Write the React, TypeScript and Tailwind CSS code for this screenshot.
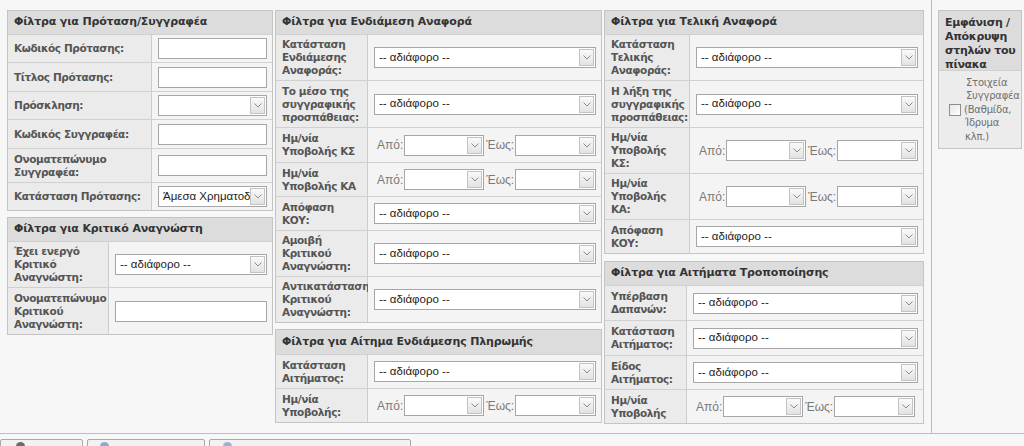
import React from "react";

const VF = { fontFamily: '"DejaVu Sans", Verdana, sans-serif' };
const AF = { fontFamily: '"Liberation Sans", Arial, sans-serif' };

function Arrow() {
  return (
    <div className="ml-auto mr-[1px] flex h-[17px] w-[15px] shrink-0 items-center justify-center border border-[#c3c3c3] bg-gradient-to-b from-[#fafafa] to-[#e2e2e2]">
      <svg width="8" height="5" viewBox="0 0 8 5">
        <path d="M0.5 0.5 L4 4 L7.5 0.5" fill="none" stroke="#8c8c8c" strokeWidth="1" />
      </svg>
    </div>
  );
}

function Select({ text = "", className = "w-full" }: { text?: string; className?: string }) {
  return (
    <div className={`flex h-[21px] shrink-0 items-center overflow-hidden border border-[#a6a6a6] bg-white ${className}`}>
      <span className="min-w-0 flex-1 overflow-hidden whitespace-nowrap pl-[4px] text-[11.5px] text-[#222]" style={AF}>
        {text}
      </span>
      <Arrow />
    </div>
  );
}

function Input() {
  return <input readOnly className="h-[21px] w-full border border-[#a6a6a6] bg-white outline-none" />;
}

function DateRange() {
  return (
    <div className="flex items-center pl-[3px] text-[12px] text-[#7a7a7a]" style={AF}>
      <span className="pr-[1px]">Από:</span>
      <Select className="w-[80px]" />
      <span className="pl-[2px] pr-[1px]">Έως:</span>
      <Select className="w-[81px]" />
    </div>
  );
}

function Row({ label, lw, h, children }: { label: string[]; lw: string; h: string; children: React.ReactNode }) {
  return (
    <div className={`flex border-t border-[#d0d0d0] ${h}`}>
      <div
        className={`flex shrink-0 items-center border-r border-[#cdcdcd] bg-[#ebebeb] pl-[6px] pr-[1px] text-[10.5px] font-bold leading-[13px] tracking-[-0.4px] text-[#555] ${lw}`}
        style={VF}
      >
        <div className="whitespace-nowrap">
          {label.map((l, i) => (
            <div key={i}>{l}</div>
          ))}
        </div>
      </div>
      <div className="flex min-w-0 flex-1 items-center bg-[#f4f4f4] pl-[6px] pr-[5px]">{children}</div>
    </div>
  );
}

function Panel({ title, children, hh = "h-[23px]" }: { title: string; children: React.ReactNode; hh?: string }) {
  return (
    <div className="border border-[#c4c4c4] bg-[#f4f4f4]">
      <div
        className={`flex items-center whitespace-nowrap bg-[#dcdcdc] px-[6px] text-[11px] font-bold tracking-[-0.15px] text-[#333] ${hh}`}
        style={VF}
      >
        {title}
      </div>
      {children}
    </div>
  );
}

const ANY = "-- αδιάφορο --";

export default function App() {
  return (
    <div className="h-[446px] w-[1024px] overflow-hidden bg-[#f7f7f7]" style={VF}>
      <div className="flex h-[434px] border-b border-[#bdbdbd]">
        <div className="flex w-[932px] shrink-0 gap-[2px] border-r border-[#bdbdbd] pl-[7px] pt-[10px]">
          {/* column 1 */}
          <div className="flex w-[266px] shrink-0 flex-col gap-[6px]">
            <Panel title="Φίλτρα για Πρόταση/Συγγραφέα">
              <Row label={["Κωδικός Πρότασης:"]} lw="w-[144px]" h="h-[28px]"><Input /></Row>
              <Row label={["Τίτλος Πρότασης:"]} lw="w-[144px]" h="h-[29px]"><Input /></Row>
              <Row label={["Πρόσκληση:"]} lw="w-[144px]" h="h-[28px]"><Select /></Row>
              <Row label={["Κωδικός Συγγραφέα:"]} lw="w-[144px]" h="h-[29px]"><Input /></Row>
              <Row label={["Ονοματεπώνυμο", "Συγγραφέα:"]} lw="w-[144px]" h="h-[34px]"><Input /></Row>
              <Row label={["Κατάσταση Πρότασης:"]} lw="w-[144px]" h="h-[28px]"><Select text="Άμεσα Χρηματοδοτούμενη" /></Row>
            </Panel>
            <Panel title="Φίλτρα για Κριτικό Αναγνώστη">
              <Row label={["Έχει ενεργό", "Κριτικό", "Αναγνώστη:"]} lw="w-[101px]" h="h-[46px]"><Select text={ANY} /></Row>
              <Row label={["Ονοματεπώνυμο", "Κριτικού", "Αναγνώστη:"]} lw="w-[101px]" h="h-[47px]"><Input /></Row>
            </Panel>
          </div>
          {/* column 2 */}
          <div className="flex w-[327px] shrink-0 flex-col gap-[6px]">
            <Panel title="Φίλτρα για Ενδιάμεση Αναφορά">
              <Row label={["Κατάσταση", "Ενδιάμεσης", "Αναφοράς:"]} lw="w-[92px]" h="h-[46px]"><Select text={ANY} /></Row>
              <Row label={["Το μέσο της", "συγγραφικής", "προσπάθειας:"]} lw="w-[92px]" h="h-[47px]"><Select text={ANY} /></Row>
              <Row label={["Ημ/νία", "Υποβολής ΚΣ"]} lw="w-[92px]" h="h-[35px]"><DateRange /></Row>
              <Row label={["Ημ/νία", "Υποβολής ΚΑ"]} lw="w-[92px]" h="h-[34px]"><DateRange /></Row>
              <Row label={["Απόφαση", "ΚΟΥ:"]} lw="w-[92px]" h="h-[34px]"><Select text={ANY} /></Row>
              <Row label={["Αμοιβή", "Κριτικού", "Αναγνώστη:"]} lw="w-[92px]" h="h-[46px]"><Select text={ANY} /></Row>
              <Row label={["Αντικατάσταση", "Κριτικού", "Αναγνώστη:"]} lw="w-[92px]" h="h-[46px]"><Select text={ANY} /></Row>
            </Panel>
            <Panel title="Φίλτρα για Αίτημα Ενδιάμεσης Πληρωμής" hh="h-[24px]">
              <Row label={["Κατάσταση", "Αιτήματος:"]} lw="w-[92px]" h="h-[34px]"><Select text={ANY} /></Row>
              <Row label={["Ημ/νία", "Υποβολής:"]} lw="w-[92px]" h="h-[34px]"><DateRange /></Row>
            </Panel>
          </div>
          {/* column 3 */}
          <div className="flex w-[320px] shrink-0 flex-col gap-[7px]">
            <Panel title="Φίλτρα για Τελική Αναφορά">
              <Row label={["Κατάσταση", "Τελικής", "Αναφοράς:"]} lw="w-[85px]" h="h-[46px]"><Select text={ANY} /></Row>
              <Row label={["Η λήξη της", "συγγραφικής", "προσπάθειας:"]} lw="w-[85px]" h="h-[47px]"><Select text={ANY} /></Row>
              <Row label={["Ημ/νία", "Υποβολής", "ΚΣ:"]} lw="w-[85px]" h="h-[46px]"><DateRange /></Row>
              <Row label={["Ημ/νία", "Υποβολής", "ΚΑ:"]} lw="w-[85px]" h="h-[46px]"><DateRange /></Row>
              <Row label={["Απόφαση", "ΚΟΥ:"]} lw="w-[85px]" h="h-[34px]"><Select text={ANY} /></Row>
            </Panel>
            <Panel title="Φίλτρα για Αιτήματα Τροποποίησης">
              <Row label={["Υπέρβαση", "Δαπανών:"]} lw="w-[82px]" h="h-[35px]"><Select text={ANY} /></Row>
              <Row label={["Κατάσταση", "Αιτήματος:"]} lw="w-[82px]" h="h-[35px]"><Select text={ANY} /></Row>
              <Row label={["Είδος", "Αιτήματος:"]} lw="w-[82px]" h="h-[34px]"><Select text={ANY} /></Row>
              <Row label={["Ημ/νία", "Υποβολής"]} lw="w-[82px]" h="h-[34px]"><DateRange /></Row>
            </Panel>
          </div>
        </div>
        {/* right column */}
        <div className="flex-1 pl-[6px] pr-[2px] pt-[10px]">
          <div className="border border-[#c4c4c4] bg-[#ececec]">
            <div className="h-[59px] whitespace-nowrap bg-[#dcdcdc] px-[6px] pt-[5px] text-[11px] font-bold leading-[14px] tracking-[-0.3px] text-[#333]">
              <div>Εμφάνιση /</div>
              <div>Απόκρυψη</div>
              <div>στηλών του</div>
              <div>πίνακα</div>
            </div>
            <div className="flex h-[78px] items-center border-t border-[#d0d0d0] pl-[10px]">
              <div className="h-[12px] w-[12px] shrink-0 border border-[#8f8f8f] bg-gradient-to-br from-[#e6e6e6] to-white" />
              <div className="whitespace-nowrap pl-[3px] text-[10px] leading-[13.5px] tracking-[-0.2px] text-[#6f6f6f]">
                <div className="pl-[2px]">Στοιχεία</div>
                <div className="pl-[2px]">Συγγραφέα</div>
                <div>(Βαθμίδα,</div>
                <div className="pl-[1px]">Ίδρυμα</div>
                <div className="pl-[1px]">κλπ.)</div>
              </div>
            </div>
          </div>
        </div>
      </div>
      {/* bottom buttons */}
      <div className="flex gap-[4px] pt-[5px]">
        {[
          { w: "w-[83px]", c: "bg-[#6b6b6b]", ml: "ml-[15px]" },
          { w: "w-[118px]", c: "bg-[#8fa9cf]", ml: "ml-[12px]" },
          { w: "w-[202px]", c: "bg-[#9cb2d2]", ml: "ml-[13px]" },
        ].map((b, i) => (
          <div key={i} className={`h-[24px] ${b.w} rounded-t-[2px] border border-[#a9a9a9] bg-[#f2f2f2] pt-[2px]`}>
            <div className={`h-[10px] w-[9px] rounded-full ${b.c} ${b.ml}`} />
          </div>
        ))}
      </div>
    </div>
  );
}
